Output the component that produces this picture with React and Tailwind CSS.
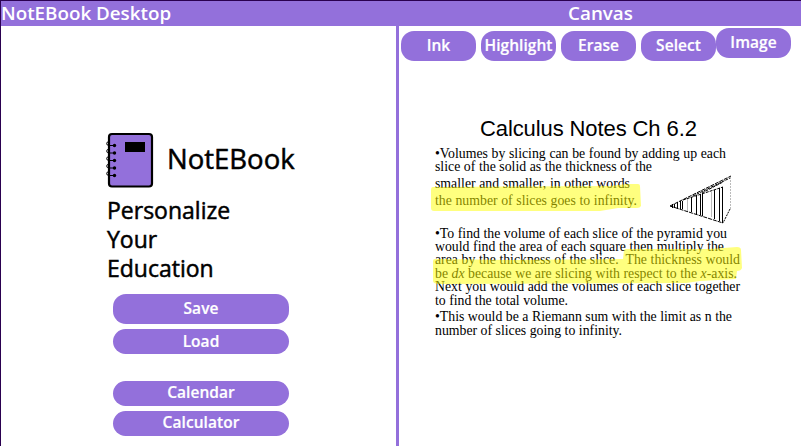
const noteLines = [
  { text: "•Volumes by slicing can be found by adding up each", cls: "w-[291px] h-[13px]" },
  { text: "slice of the solid as the thickness of the", cls: "w-[217px] h-[17px]" },
  { text: "smaller and smaller, in other words", cls: "w-[195px] h-[17px]" },
  { text: "the number of slices goes to infinity.", cls: "w-[202px] h-[33px]" },
  { text: "•To find the volume of each slice of the pyramid you", cls: "w-[292px] h-[13px]" },
  { text: "would find the area of each square then multiply the", cls: "w-[289px] h-[13px]" },
  { text: "area by the thickness of the slice.\u00a0 The thickness would", cls: "w-[305px] h-[14px]" },
  { text: <>be <i>dx</i> because we are slicing with respect to the <i>x</i>-axis.</>, cls: "w-[302px] h-[13px]" },
  { text: "Next you would add the volumes of each slice together", cls: "w-[305px] h-[14px]" },
  { text: "to find the total volume.", cls: "w-[133px] h-[16px]" },
  { text: "•This would be a Riemann sum with the limit as n the", cls: "w-[297px] h-[14px]" },
  { text: "number of slices going to infinity.", cls: "w-[187px] h-[13px]" },
];

function PillButton({ children, className }) {
  return (
    <button className={`flex shrink-0 items-center justify-center rounded-[13px] bg-[#9370db] text-[15.5px] font-semibold leading-none tracking-[0.05px] text-white [-webkit-text-stroke:0.2px_white] ${className}`}>
      {children}
    </button>
  );
}

function NotebookLogo() {
  return (
    <svg className="h-[56px] w-[49px] shrink-0" viewBox="0 0 49 56" fill="none" stroke="#000">
      <rect x="3" y="2" width="43" height="52.5" rx="3" fill="#9370db" strokeWidth="2.2" />
      <rect x="19" y="10" width="20" height="10" fill="#000" stroke="none" />
      {[13, 20.5, 28, 35.5, 43].map((y) => (
        <g key={y}>
          <path d={`M9 ${y + 0.5}H3Q.7 ${y + 0.5} .7 ${y - 1.5}T3.5 ${y - 3.5}`} />
          <circle cx="8.5" cy={y + 0.5} r="1.7" fill="#000" stroke="none" />
        </g>
      ))}
    </svg>
  );
}

function Pyramid() {
  return (
    <svg className="absolute left-[270px] top-[149px] h-[50px] w-[64px]" viewBox="0 0 64 50" fill="none" stroke="#000" strokeWidth="1">
      <path d="M1 31L62 1M1 31L54 48" strokeDasharray="4 1" />
      <path d="M14 25L54 12M24 21L61 3M33 18L54 7" strokeDasharray="3 1" />
      <path d="M3.5 29v4M5.5 29v4M8.5 27v7M11.5 26v8M13.5 26v8" />
      <path d="M22.5 22v15M27.5 20v19M31.5 19v21M33.5 18v23M45.5 15v29M50.5 13v33M53.5 12v36" />
      <path d="M18.5 24v12M42.5 16v26" stroke="#bbb" />
      <path d="M61.5 2v33" stroke="#bbb" strokeDasharray="2 1" />
      <path d="M61 34L54 48" strokeDasharray="2 1" />
    </svg>
  );
}

function Highlighter() {
  return (
    <svg className="pointer-events-none absolute left-0 top-0 h-[420px] w-[402px]" viewBox="399 26 402 420" fill="#ffff00" fillOpacity=".5">
      <path d="M433 187L610 186L627 184H638Q640 184 640 186L641 206Q640 208 637 208L618 208L600 211L434 211Q431 211 431 208V190Q431 187 433 187Z" />
      <path d="M435 259L510 260L623 259L624 250Q624 249 627 249L710 249L737 247Q741 247 741 250L742 268Q741 271 737 271L736 279L700 281L686 283L440 284Q433 284 433 281V261Q433 259 435 259Z" />
    </svg>
  );
}

export default function App() {
  return (
    <div className="flex h-[446px] w-[801px] flex-col overflow-hidden border-l border-t border-[#2a0050] bg-white font-['Open_Sans',sans-serif] text-black">
      <header className="flex h-[25px] shrink-0 bg-[#9370db] text-[18.8px] font-semibold leading-[25px] text-white">
        <div className="w-[398px]">NotEBook Desktop</div>
        <div className="w-[404px] pl-[2px] text-center">Canvas</div>
      </header>
      <div className="flex flex-1">
        <aside className="w-[398px] shrink-0 border-r-[3px] border-[#9370db] pl-[105px] pt-[106px]">
          <div className="flex h-[56px] items-center">
            <NotebookLogo />
            <h1 className="-mt-[3px] ml-[12px] whitespace-nowrap text-[27.5px] leading-none [-webkit-text-stroke:0.5px_black]">NotEBook</h1>
          </div>
          <p className="mt-[8px] w-[140px] pl-px text-[23px] leading-[29px] [-webkit-text-stroke:0.5px_black]">Personalize Your Education</p>
          <div className="flex flex-col pl-[7px] pt-[11px]">
            <PillButton className="h-[30px] w-[176px]">Save</PillButton>
            <PillButton className="mt-[5px] h-[25px] w-[176px]">Load</PillButton>
            <PillButton className="mt-[27px] h-[25px] w-[176px] pb-px">Calendar</PillButton>
            <PillButton className="mt-[5px] h-[25px] w-[176px] pb-px">Calculator</PillButton>
          </div>
        </aside>
        <main className="relative w-[402px]">
          <nav className="flex pl-[2px] pt-[5px]">
            <PillButton className="h-[30px] w-[75px]">Ink</PillButton>
            <PillButton className="ml-[5px] h-[30px] w-[75px]">Highlight</PillButton>
            <PillButton className="ml-[5px] h-[30px] w-[75px]">Erase</PillButton>
            <PillButton className="ml-[5px] h-[30px] w-[75px]">Select</PillButton>
            <PillButton className="-mt-[3px] h-[30px] w-[75px]">Image</PillButton>
          </nav>
          <article className="pl-[36px] pt-[55px]">
            <h2 className="ml-[45px] whitespace-nowrap font-['Liberation_Sans',sans-serif] text-[22px] leading-[25px] tracking-[-0.1px]">Calculus Notes Ch 6.2</h2>
            <div className="pt-[6px] font-['Liberation_Serif',serif] text-[13.8px] leading-[13px]">
              {noteLines.map((line, i) => (
                <p key={i} className={`whitespace-nowrap [text-align-last:justify] ${line.cls}`}>{line.text}</p>
              ))}
            </div>
          </article>
          <Pyramid />
          <Highlighter />
        </main>
      </div>
    </div>
  );
}
